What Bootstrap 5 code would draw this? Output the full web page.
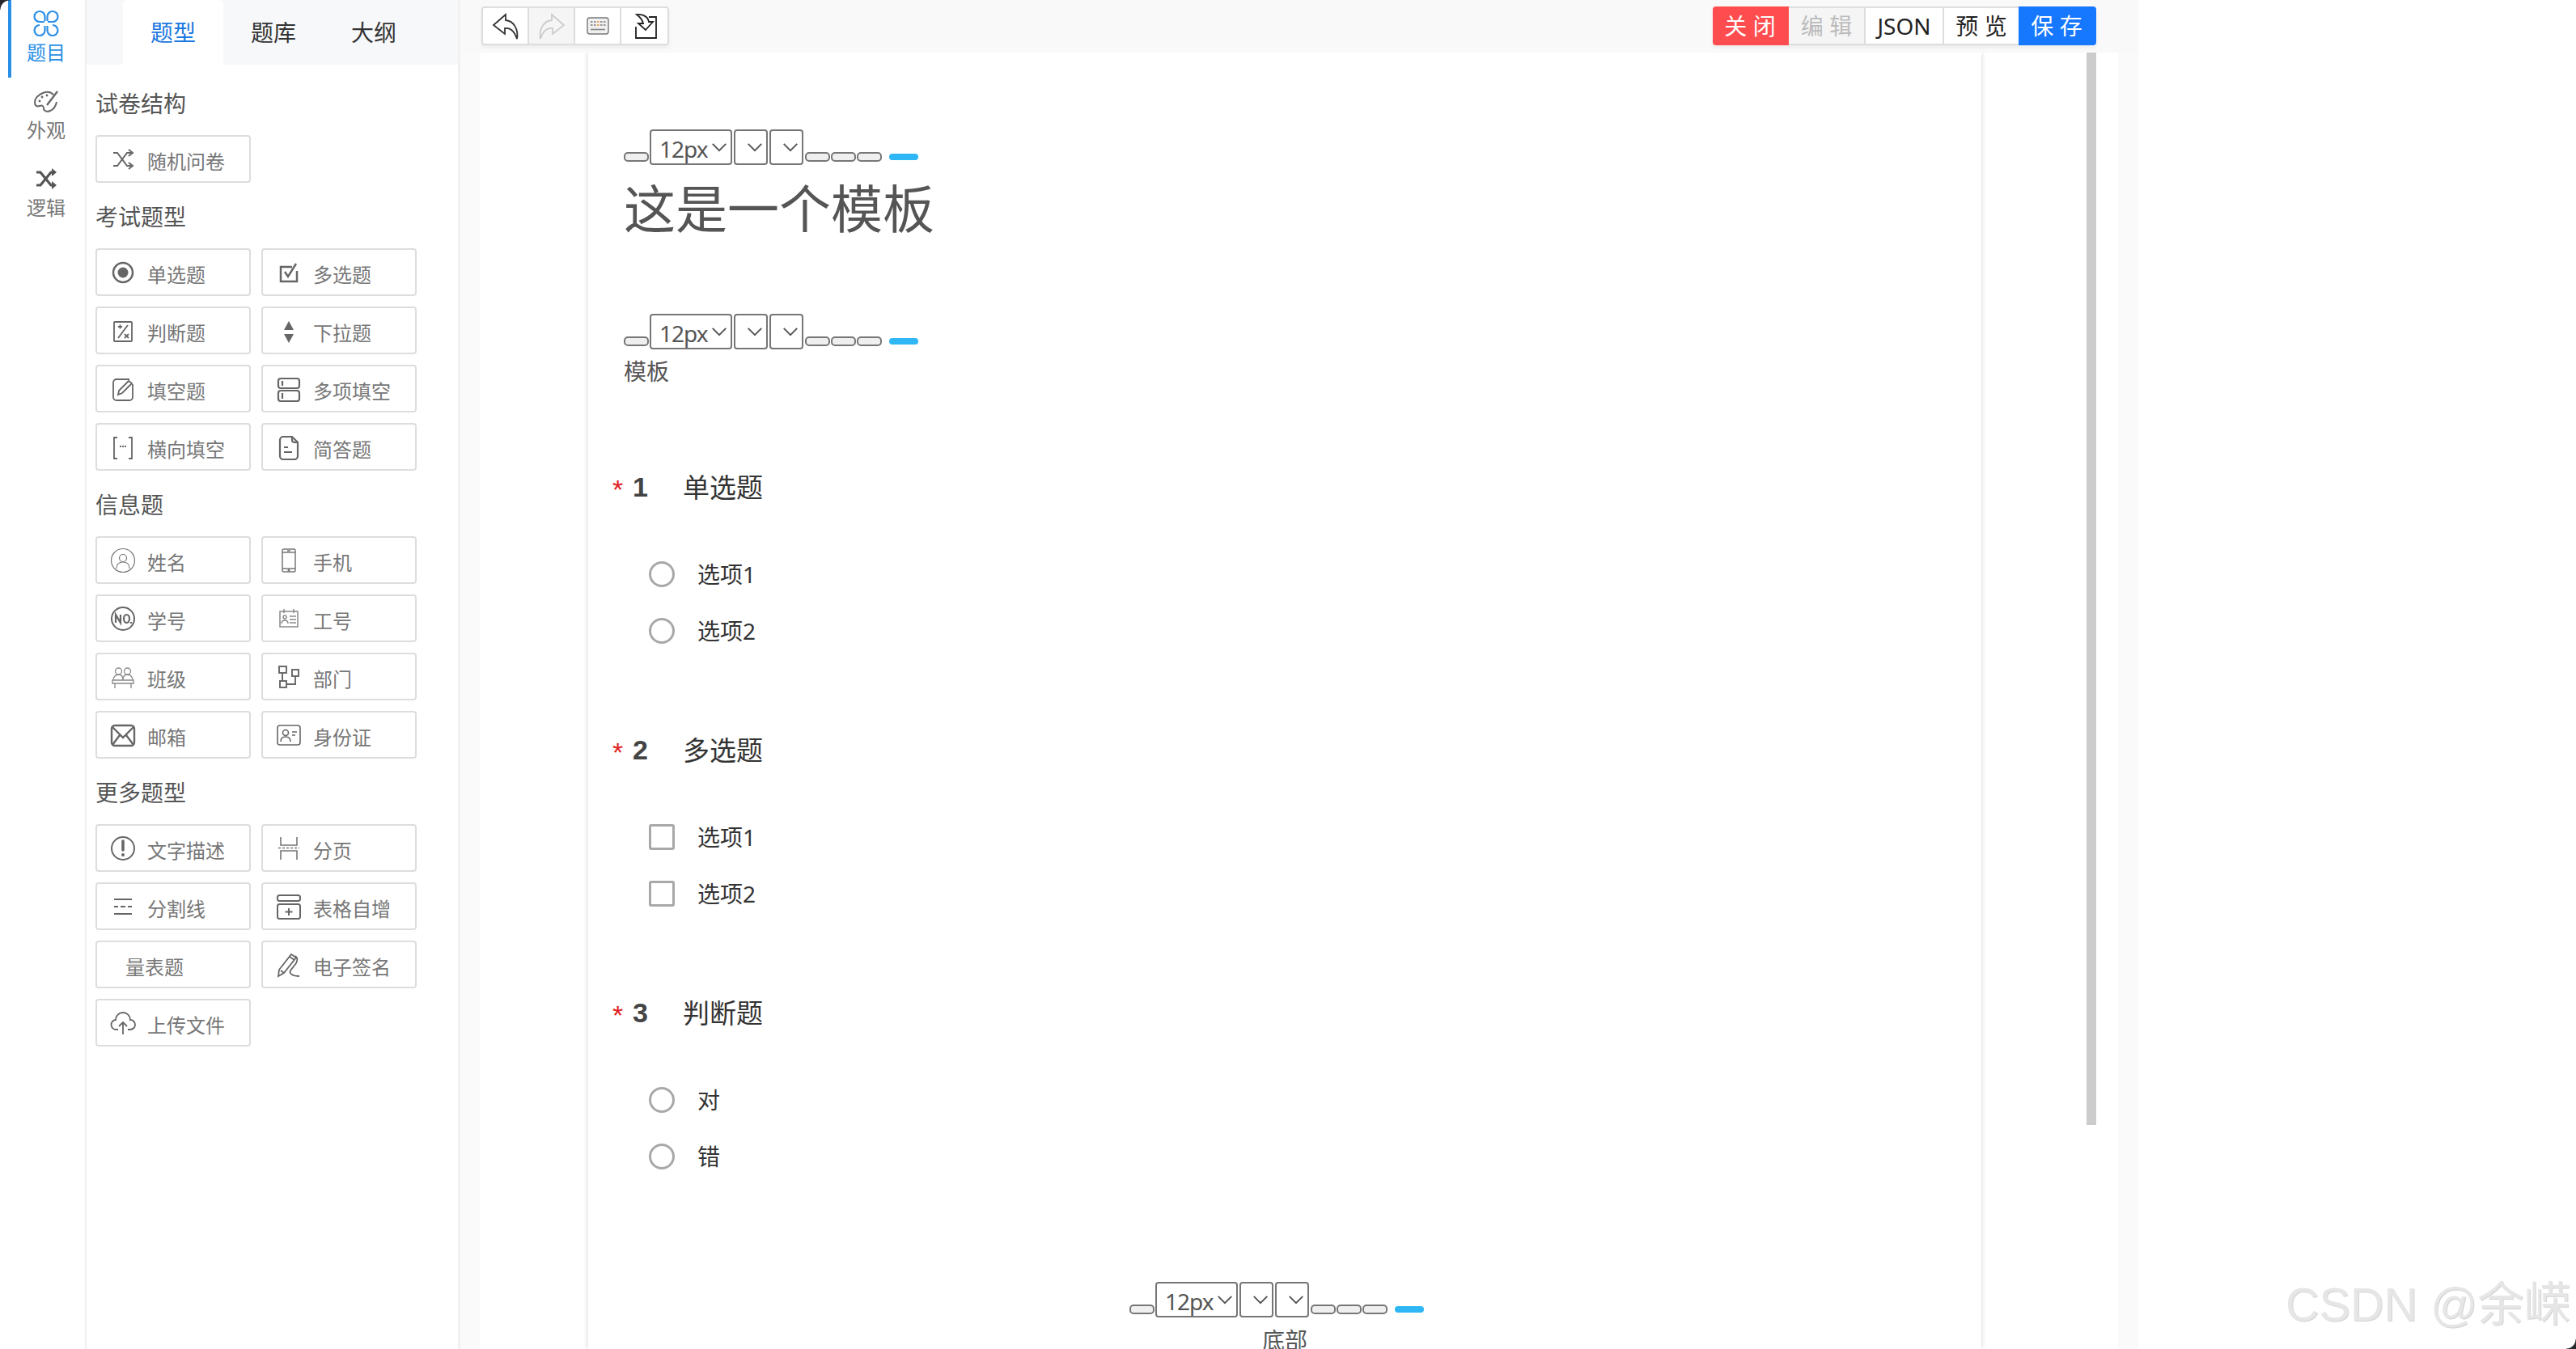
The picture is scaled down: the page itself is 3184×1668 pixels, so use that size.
<!DOCTYPE html>
<html lang="zh"><head><meta charset="utf-8"><title>问卷设计</title>
<link href="https://cdn.jsdelivr.net/npm/bootstrap@5.3.0/dist/css/bootstrap.min.css" rel="stylesheet">
<style>
html,body{height:100%;overflow:hidden;background:#fff}
body{font-family:"Noto Sans","Noto Sans CJK SC",sans-serif;color:#333;position:relative}
.app-shell{height:1668px;width:3184px}
.rail{width:107px;flex:none;border-right:2px solid #eee;position:relative}
.rail-item{height:96px;font-size:24px;line-height:32px;color:#777;padding-top:11px;text-align:center;padding-left:9px}
.rail-item svg{display:block;margin:0 auto 2px}
.rail-item.on{color:#2b8fe6;position:relative}
.rail-item.on::before{content:"";position:absolute;left:10px;top:0;bottom:0;width:4px;background:#2b8fe6}
.panel{width:462px;flex:none;border-right:3px solid #f1f1f1;position:relative}
.tabs-head{height:80px;background:#f7f8fa;padding-left:45px}
.tab-x{width:124px;font-size:28px;line-height:80px;text-align:center;color:#333}
.tab-x.on{background:#fff;color:#1b78e0;border-radius:6px 6px 0 0}
.sec-title{font-size:28px;line-height:40px;color:#555;padding:22px 0 19px;margin:0;font-weight:400}
.sec-first{padding:28px 0 19px}
.panel-body{padding:0 0 0 11px}
.qgrid{display:grid;grid-template-columns:192px 192px;gap:13px;}
.qbtn{height:59px;border:2px solid #ddd;border-radius:4px;background:#fff;font-size:24px;color:#777;display:flex;align-items:center;padding:6px 0 0 16px;line-height:1}
.qbtn svg{flex:none;width:32px;height:32px;margin-right:14px;margin-top:-6px}
.qbtn.noicon{padding-left:35px}
.stage{flex:none;width:2074px;background:#fafafa}
.topbar{height:65px;padding:8px 52px 0 26px;background:#f9f9f9}
.tb-group{display:flex;height:48px;border:2px solid #ddd;border-radius:4px;background:#fff;box-shadow:0 3px 4px rgba(0,0,0,.05)}
.tb-cell{width:57px;display:flex;align-items:center;justify-content:center;border-right:2px solid #ddd}
.tb-cell:last-child{border-right:0}
.tb-cell.dis{background:#f5f5f5}
.act-group{display:flex;height:48px;font-size:28px;line-height:44px;box-shadow:0 3px 4px rgba(0,0,0,.05);border-radius:4px}
.act{text-align:center;border:2px solid #ddd;border-left:0;background:#fff;color:#222;white-space:pre}
.act.red{background:#ff4d4f;color:#fff;border-color:#ff4d4f;border-radius:4px 0 0 4px;width:94px}
.act.off{background:#f5f5f5;color:#bbb;width:95px;border-left:0}
.act.json{width:97px}
.act.view{width:92px;border-right:0}
.act.blue{background:#1677ff;color:#fff;border-color:#1677ff;border-radius:0 4px 4px 0;width:96px}
.canvas-wrap{margin:0 25px 0 24px;background:#fff;height:1603px;position:relative;overflow:hidden}
.paper{position:absolute;top:0;bottom:0;left:134px;width:1722px;box-shadow:0 0 6px rgba(0,0,0,.18);background:#fff;padding:95px 44px 0}
.scrollthumb{position:absolute;left:1986px;top:0;width:12px;height:1326px;background:#ccc}
.ed-tools{display:flex;align-items:flex-end;height:44px;color:#555;text-align:left}
.ed-tools .mini{width:31px;height:12px;border:2px solid #777;border-radius:5px;background:#efefef;margin-bottom:4px;margin-right:1px}
.ed-sel{height:44px;border:2px solid #767676;border-radius:4px;background:#fff;margin-right:2px;font-size:28px;letter-spacing:-1px;line-height:44px;padding-left:10px;position:relative;color:#555}
.ed-sel.sz{width:102px}
.ed-sel.e1{width:42px}
.ed-sel svg{position:absolute;right:3px;top:9px}
.ed-sel.sz svg{right:3px}
.pill{width:36px;height:8px;border-radius:4px;background:#2eb6f5;margin:0 20px 6px 8px}
.big-title{font-size:64px;line-height:92px;color:#555;font-weight:400;margin:0 0 2px;padding-top:8px}
.sub-gap{height:82px}
.sub-title{font-size:28px;line-height:40px;color:#555;margin:7px 0 0}
.q-block{height:325px;position:relative}
.q-list{margin-top:104px}
.q-head{display:flex;align-items:center;height:40px;margin-left:-14px}
.q-req{color:#e02020;font-size:34px;font-family:"Liberation Sans",sans-serif;width:25px;line-height:1;margin-top:4px}
.q-no{font-family:"Liberation Sans",sans-serif;font-weight:700;font-size:34px;color:#444;width:62px;margin-top:-2px}
.q-txt{font-size:33px;color:#333}
.q-opts{margin:52px 0 0 31px}
.q-opt{height:70px;display:flex;align-items:center;font-size:28px;color:#333}
.mk{width:32px;height:32px;border:3px solid #a8a8a8;background:#fff;margin-right:28px;flex:none}
.mk.r{border-radius:50%}
.mk.c{border-radius:3px}
.foot-zone{text-align:center;margin-top:27px}
.foot-zone .ed-tools{display:inline-flex}
.foot-text{font-size:28px;line-height:40px;color:#555;margin-top:6px}
.wm{position:absolute;left:2825px;top:1578px;font:400 57.500px/70px "Liberation Sans","Noto Sans CJK SC",sans-serif;color:#e6e6e6;text-shadow:1px 1px 0 #d4d4d4;white-space:nowrap;pointer-events:none}
.corner{position:absolute;width:12px;height:12px}
.corner.tl{left:0;top:0;background:radial-gradient(circle at 100% 100%,transparent 11px,#26282b 12px)}
.corner.br{right:0;bottom:0;background:radial-gradient(circle at 0 0,transparent 11px,#26282b 12px)}
</style></head>
<body>
<svg width="0" height="0" class="position-absolute">
<defs>
<symbol id="chev" viewBox="0 0 16 16"><path d="M2 5l6 6 6-6" fill="none" stroke="#555" stroke-width="1.400"/></symbol>
</defs>
</svg>
<div class="app-shell d-flex">
  <div class="rail">
    <div class="rail-item on">
      <svg width="32" height="36" viewBox="0 0 32 36" fill="none" stroke="#2b8fe6" stroke-width="2.200"><path d="M14.500 15V9a6.500 6.500 0 1 0-6.500 7h6M17.500 15V9a6.500 6.500 0 1 1 6.500 7h-6"/><path d="M14.500 21v6a6.500 6.500 0 1 1-6.500-7M17.500 21v6a6.500 6.500 0 1 0 6.500-7"/></svg>
      <div>题目</div>
    </div>
    <div class="rail-item">
      <svg width="32" height="36" viewBox="0 0 32 36" fill="none" stroke="#666" stroke-width="2"><path d="M25 10c-3-3-8-4-13-2C7 10 2 14 2 20c0 4 3 5 6 4 3-1 5 0 5 3 0 3 4 5 8 3 4-1.500 7-6 8-11"/><path d="M30 6L17 23" stroke-width="2.400"/><circle cx="8" cy="18" r="1.400" fill="#666" stroke="none"/><circle cx="11" cy="13" r="1.400" fill="#666" stroke="none"/><circle cx="17" cy="11" r="1.400" fill="#666" stroke="none"/></svg>
      <div>外观</div>
    </div>
    <div class="rail-item">
      <svg width="32" height="36" viewBox="0 0 32 36" fill="none" stroke="#555" stroke-width="3.200"><path d="M4 10h5l13 16h4"/><path d="M4 26h5l13-16h4"/><path d="M23 5l6 5-6 5z" fill="#555" stroke="none"/><path d="M23 21l6 5-6 5z" fill="#555" stroke="none"/></svg>
      <div>逻辑</div>
    </div>
  </div>
  <div class="panel">
    <div class="tabs-head d-flex">
      <div class="tab-x on">题型</div><div class="tab-x">题库</div><div class="tab-x">大纲</div>
    </div>
    <div class="panel-body">
      <div class="sec-title sec-first">试卷结构</div>
      <div class="qgrid">
        <div class="qbtn"><svg viewBox="0 0 32 32" fill="none" stroke="#666" stroke-width="2"><path d="M4 8h5l12 16h5"/><path d="M4 24h5l12-16h5"/><path d="M23 4l5 4-5 4M23 20l5 4-5 4"/></svg>随机问卷</div>
      </div>
      <div class="sec-title">考试题型</div>
      <div class="qgrid">
        <div class="qbtn"><svg viewBox="0 0 32 32" fill="none" stroke="#666" stroke-width="2.500"><circle cx="16" cy="16" r="12"/><circle cx="16" cy="16" r="6.500" fill="#666" stroke="none"/></svg>单选题</div>
        <div class="qbtn"><svg viewBox="0 0 32 32" fill="none" stroke="#666" stroke-width="2.500"><path d="M26 14v13H6V9h14"/><path d="M11 15l4 6L25 5"/></svg>多选题</div>
        <div class="qbtn"><svg viewBox="0 0 32 32" fill="none" stroke="#666" stroke-width="1.800"><rect x="5" y="5" width="22" height="24" rx="1"/><path d="M10 25L22 9"/><path d="M10 11h5M12.500 8.500v5"/><path d="M18 20l5 5M23 20l-5 5"/></svg>判断题</div>
        <div class="qbtn"><svg viewBox="0 0 32 32" fill="#666"><path d="M16 4l6 11H10z"/><path d="M16 31l6-11H10z"/></svg>下拉题</div>
        <div class="qbtn"><svg viewBox="0 0 32 32" fill="none" stroke="#666" stroke-width="1.800"><path d="M24 4H8a4 4 0 0 0-4 4v18a4 4 0 0 0 4 4h16a4 4 0 0 0 4-4V10"/><path d="M10 23l1-5L23 6l4 3-12 12z"/></svg>填空题</div>
        <div class="qbtn"><svg viewBox="0 0 32 32" fill="none" stroke="#666" stroke-width="2.200"><rect x="3" y="3" width="26" height="12" rx="3"/><rect x="3" y="18" width="26" height="13" rx="3"/><path d="M8 6v6M8 21v7"/></svg>多项填空</div>
        <div class="qbtn"><svg viewBox="0 0 32 32" fill="none" stroke="#666" stroke-width="1.800"><path d="M9 4H5v26h4M23 4h4v26h-4"/><path d="M12 15h2M15 15h2M18 15h2" stroke-width="2.200"/></svg>横向填空</div>
        <div class="qbtn"><svg viewBox="0 0 32 32" fill="none" stroke="#666" stroke-width="2.200"><path d="M20 3H9a4 4 0 0 0-4 4v20a4 4 0 0 0 4 4h14a4 4 0 0 0 4-4V10z"/><path d="M20 3v4a3 3 0 0 0 3 3h4"/><path d="M10 16h5M10 22h10"/></svg>简答题</div>
      </div>
      <div class="sec-title">信息题</div>
      <div class="qgrid">
        <div class="qbtn"><svg viewBox="0 0 32 32" fill="none" stroke="#777" stroke-width="1.200"><circle cx="16" cy="16" r="14.500"/><circle cx="16" cy="13" r="4.500"/><path d="M8 26c0-6 3-8 8-8s8 2 8 8"/></svg>姓名</div>
        <div class="qbtn"><svg viewBox="0 0 32 32" fill="none" stroke="#777" stroke-width="1.500"><rect x="8" y="2" width="16" height="28" rx="1.500"/><path d="M8 6h16M8 26h16M14 4h4"/><circle cx="16" cy="28" r=".8" fill="#777"/></svg>手机</div>
        <div class="qbtn"><svg viewBox="0 0 32 32" fill="none" stroke="#666" stroke-width="2"><circle cx="16" cy="16" r="14"/><path d="M7 21V11l6 10V11" stroke-width="2.200"/><ellipse cx="20.500" cy="16" rx="3.500" ry="5" stroke-width="2.200"/><path d="M26 20v2" stroke-width="2.200"/></svg>学号</div>
        <div class="qbtn"><svg viewBox="0 0 32 32" fill="none" stroke="#888" stroke-width="1.500"><rect x="5" y="7" width="22" height="19"/><path d="M10 4v5M22 4v5"/><circle cx="11" cy="14" r="2"/><path d="M7 22c0-3 2-4 4-4s4 1 4 4"/><path d="M17 13h8M17 17h8M17 21h8"/></svg>工号</div>
        <div class="qbtn"><svg viewBox="0 0 32 32" fill="none" stroke="#888" stroke-width="1.300"><circle cx="10.500" cy="9" r="4"/><circle cx="21.500" cy="9" r="4"/><path d="M4 20c0-4 3-7 6.500-7s5.500 3 5.500 7c0-4 2-7 5.500-7s6.500 3 6.500 7"/><path d="M3 20h26v4H3z"/><path d="M6 24v6M26 24v6"/></svg>班级</div>
        <div class="qbtn"><svg viewBox="0 0 32 32" fill="none" stroke="#666" stroke-width="1.900"><rect x="4" y="3" width="9" height="8"/><rect x="5" y="21" width="8" height="8"/><rect x="20" y="7" width="8" height="8"/><path d="M8 11v10M13 25h11V15"/></svg>部门</div>
        <div class="qbtn"><svg viewBox="0 0 32 32" fill="none" stroke="#666" stroke-width="2.400"><rect x="2" y="4" width="28" height="25" rx="4"/><path d="M3 6l13 13L29 6M3 28l9-12M29 28l-9-12"/></svg>邮箱</div>
        <div class="qbtn"><svg viewBox="0 0 32 32" fill="none" stroke="#666" stroke-width="1.600"><rect x="2" y="4" width="28" height="24" rx="3"/><circle cx="12" cy="13" r="3.500"/><path d="M6 24c0-5 3-6 6-6s6 1 6 6"/><path d="M20 12h6M20 16h4"/></svg>身份证</div>
      </div>
      <div class="sec-title">更多题型</div>
      <div class="qgrid">
        <div class="qbtn"><svg viewBox="0 0 32 32" fill="none" stroke="#666" stroke-width="2"><circle cx="16" cy="16" r="14"/><path d="M16 7v11" stroke-width="3.600" stroke-linecap="round"/><circle cx="16" cy="24" r="2" fill="#666" stroke="none"/></svg>文字描述</div>
        <div class="qbtn"><svg viewBox="0 0 32 32" fill="none" stroke="#777" stroke-width="1.600"><path d="M6 2v10h20V2M6 30V19h20v11"/><path d="M3 15.500h26" stroke-dasharray="3 2"/></svg>分页</div>
        <div class="qbtn"><svg viewBox="0 0 32 32" fill="none" stroke="#666" stroke-width="2.200"><path d="M5 7h22M5 25h22"/><path d="M5 16h5M13 16h6M22 16h5"/></svg>分割线</div>
        <div class="qbtn"><svg viewBox="0 0 32 32" fill="none" stroke="#666" stroke-width="2"><rect x="2" y="2" width="28" height="7" rx="2.500"/><rect x="2" y="13" width="28" height="18" rx="2.500"/><path d="M16 18v9M11.500 22.500h9"/></svg>表格自增</div>
        <div class="qbtn noicon">量表题</div>
        <div class="qbtn"><svg viewBox="0 0 32 32" fill="none" stroke="#666" stroke-width="1.800"><path d="M3 30l1-8L19 3l6 4L10 26z"/><path d="M17 6l6 4M6 23l4 3"/><path d="M24 5c3 3 3 5 1 9l-7 9c-2 4 3 7 11 7"/></svg>电子签名</div>
        <div class="qbtn"><svg viewBox="0 0 32 32" fill="none" stroke="#666" stroke-width="1.800"><path d="M10 24H8a6 6 0 0 1-1-12 9 9 0 0 1 18 0 6 6 0 0 1 0 12h-3"/><path d="M16 30V15M11 20l5-5 5 5"/></svg>上传文件</div>
      </div>
    </div>
  </div>
  <div class="stage">
    <div class="topbar d-flex justify-content-between align-items-start">
      <div class="tb-group">
        <div class="tb-cell"><svg width="36" height="36" viewBox="0 0 36 36" fill="none" stroke="#333" stroke-width="1.800"><path d="M18 4L3 17l14 11v-7c7-1 12 4 15 13 2-12-4-22-14-23z"/></svg></div>
        <div class="tb-cell dis"><svg width="36" height="36" viewBox="0 0 36 36" fill="none" stroke="#ccc" stroke-width="1.800"><path d="M18 4l15 13-14 11v-7C12 20 7 25 4 34 2 22 8 12 18 11z"/></svg></div>
        <div class="tb-cell"><svg width="28" height="22" viewBox="0 0 28 22" fill="none"><rect x="1" y="1" width="26" height="20" rx="3" fill="#f0f0f0" stroke="#777" stroke-width="1.400"/><path d="M5 6h2.500M9 6h2.500M17 6h2.500M21 6h2.500M5 10h2.500M9 10h2.500M17 10h2.500M21 10h2.500" stroke="#777" stroke-width="1.600"/><path d="M13 6h2.500M13 10h2.500" stroke="#e8913a" stroke-width="1.600"/><path d="M5 15.500h18" stroke="#888" stroke-width="1.600"/></svg></div>
        <div class="tb-cell"><svg width="36" height="36" viewBox="0 0 36 36" fill="none" stroke="#222" stroke-width="1.800"><path d="M23 7h9v26H7V19"/><path d="M8 4c8-1 14 3 15 9h5l-9 10-9-8h6c-1-5-4-8-8-11z"/></svg></div>
      </div>
      <div class="act-group">
        <div class="act red">关 闭</div><div class="act off">编 辑</div><div class="act json">JSON</div><div class="act view">预 览</div><div class="act blue">保 存</div>
      </div>
    </div>
    <div class="canvas-wrap">
      <div class="paper">
        <div class="ed-tools"><span class="mini"></span><span class="ed-sel sz">12px<svg width="22" height="22"><use href="#chev"/></svg></span><span class="ed-sel e1"><svg width="22" height="22"><use href="#chev"/></svg></span><span class="ed-sel e1"><svg width="22" height="22"><use href="#chev"/></svg></span><span class="mini"></span><span class="mini"></span><span class="mini"></span><span class="pill"></span></div>
        <h1 class="big-title">这是一个模板</h1>
        <div class="sub-gap"></div>
        <div class="ed-tools"><span class="mini"></span><span class="ed-sel sz">12px<svg width="22" height="22"><use href="#chev"/></svg></span><span class="ed-sel e1"><svg width="22" height="22"><use href="#chev"/></svg></span><span class="ed-sel e1"><svg width="22" height="22"><use href="#chev"/></svg></span><span class="mini"></span><span class="mini"></span><span class="mini"></span><span class="pill"></span></div>
        <div class="sub-title">模板</div>
        <div class="q-list">
          <div class="q-block"><div class="q-head"><span class="q-req">*</span><span class="q-no">1</span><span class="q-txt">单选题</span></div>
            <div class="q-opts"><div class="q-opt"><span class="mk r"></span>选项1</div><div class="q-opt"><span class="mk r"></span>选项2</div></div></div>
          <div class="q-block"><div class="q-head"><span class="q-req">*</span><span class="q-no">2</span><span class="q-txt">多选题</span></div>
            <div class="q-opts"><div class="q-opt"><span class="mk c"></span>选项1</div><div class="q-opt"><span class="mk c"></span>选项2</div></div></div>
          <div class="q-block"><div class="q-head"><span class="q-req">*</span><span class="q-no">3</span><span class="q-txt">判断题</span></div>
            <div class="q-opts"><div class="q-opt"><span class="mk r"></span>对</div><div class="q-opt"><span class="mk r"></span>错</div></div></div>
        </div>
        <div class="foot-zone"><div class="ed-tools"><span class="mini"></span><span class="ed-sel sz">12px<svg width="22" height="22"><use href="#chev"/></svg></span><span class="ed-sel e1"><svg width="22" height="22"><use href="#chev"/></svg></span><span class="ed-sel e1"><svg width="22" height="22"><use href="#chev"/></svg></span><span class="mini"></span><span class="mini"></span><span class="mini"></span><span class="pill"></span></div>
        <div class="foot-text">底部</div></div>
      </div>
      <div class="scrollthumb"></div>
    </div>
  </div>
</div>
<div class="wm">CSDN @余嵘</div>
<div class="corner tl"></div><div class="corner br"></div>
<script src="https://cdn.jsdelivr.net/npm/bootstrap@5.3.0/dist/js/bootstrap.bundle.min.js"></script>
</body></html>
